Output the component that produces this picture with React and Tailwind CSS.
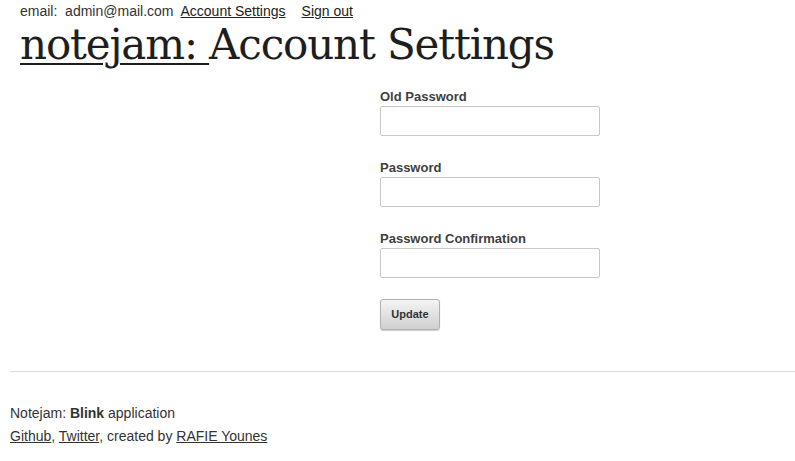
import React from 'react';

const Field = ({ label, last }) => (
  <div className={last ? 'mb-[21px]' : 'mb-[24px]'}>
    <label className="block text-[13px] font-bold text-[#404040] leading-[16px] mb-[1px]">{label}</label>
    <input
      type="password"
      className="block w-[220px] h-[30px] border border-[#c8c8c8] rounded-[2px] bg-white"
    />
  </div>
);

export default function App() {
  return (
    <div className="bg-white w-[795px] h-[461px] overflow-hidden text-[#333] font-['Liberation_Sans',Arial,sans-serif]">
      <div className="px-[20px]">
        <div className="text-[14px] leading-[16px] pt-[3px] text-[#333]">
          <span>email:&nbsp; admin@mail.com</span>
          <a href="#" className="underline ml-[7px] text-[#222]">Account Settings</a>
          <a href="#" className="underline ml-[16px] text-[#222]">Sign out</a>
        </div>
        <h1 className="font-['DejaVu_Serif',Georgia,serif] text-[42px] leading-[52px] text-[#1e1e1e] tracking-[-1.15px]">
          <a href="#" className="underline decoration-[2px] underline-offset-[4px]">notejam: </a>Account Settings
        </h1>
      </div>
      <div className="pl-[380px] pt-[18px]">
        <Field label="Old Password" />
        <Field label="Password" />
        <Field label="Password Confirmation" last />
        <button className="w-[60px] h-[31px] border border-[#b0b0b0] rounded-[3px] bg-gradient-to-b from-[#f4f4f4] to-[#cfcfcf] text-[11px] font-bold text-[#333] shadow-[0_1px_1px_rgba(0,0,0,0.2)]">
          Update
        </button>
      </div>
      <div className="ml-[10px] mt-[41px] border-t border-[#ddd]" />
      <div className="px-[10px] pt-[30px] text-[14px] leading-[23px] text-[#333]">
        <div>Notejam: <b>Blink</b> application</div>
        <div>
          <a href="#" className="underline">Github</a>, <a href="#" className="underline">Twitter</a>, created by <a href="#" className="underline">RAFIE Younes</a>
        </div>
      </div>
    </div>
  );
}
